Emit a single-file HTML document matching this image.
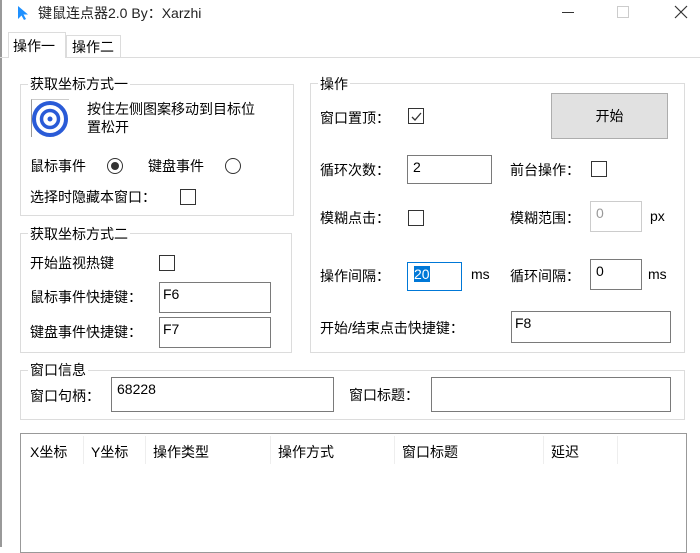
<!DOCTYPE html>
<html><head><meta charset="utf-8"><style>
*{margin:0;padding:0;box-sizing:border-box}
body{width:700px;height:547px;background:#fff;position:relative;overflow:hidden;font-family:"Liberation Sans","Noto Sans CJK SC",sans-serif;font-size:14px;color:#000}
.a{position:absolute;white-space:nowrap;line-height:16px}
.g{position:absolute;border:1px solid #dcdcdc}
.gt{position:absolute;background:#fff;padding:0 2px;line-height:16px;white-space:nowrap}
.tb{position:absolute;border:1px solid #7a7a7a;background:#fff;padding:3px 0 0 5px;line-height:16px}
.cb{position:absolute;width:16px;height:16px;border:1px solid #333;background:#fff}
.rd{position:absolute;width:16px;height:16px;border:1px solid #333;border-radius:50%;background:#fff}
</style></head><body>
<div style="position:absolute;left:0;top:0;width:2px;height:547px;background:#999"></div>
<svg class="a" style="left:16px;top:5px" width="14" height="16" viewBox="0 0 14 16"><path d="M2 1 L2 14 L5.5 10.5 L8 15 L10 14 L7.5 9.5 L12 9.5 Z" fill="#1e90ff"/></svg>
<div class="a" style="left:38px;top:5px;font-size:14px;color:#222">键鼠连点器2.0 By：Xarzhi</div>
<div class="a" style="left:562px;top:12px;width:12px;height:1px;background:#333"></div>
<div class="a" style="left:617px;top:6px;width:12px;height:12px;border:1px solid #ccc"></div>
<svg class="a" style="left:674px;top:5px" width="14" height="14"><path d="M1 1L13 13M13 1L1 13" stroke="#333" stroke-width="1.2"/></svg>
<div class="a" style="left:0;top:57px;width:700px;height:1px;background:#dcdcdc"></div>
<div class="a" style="left:8px;top:32px;width:58px;height:26px;border:1px solid #dcdcdc;border-bottom:none;background:#fff;padding:5px 0 0 4px">操作一</div>
<div class="a" style="left:66px;top:35px;width:55px;height:22px;border:1px solid #dcdcdc;border-bottom:none;padding:3px 0 0 5px">操作二</div>

<div class="g" style="left:20px;top:84px;width:274px;height:132px"></div>
<div class="gt" style="left:28px;top:76px">获取坐标方式一</div>
<div class="a" style="left:31px;top:99px;width:38px;height:38px;border-left:1px solid #999;border-top:1px solid #ccc"></div>
<svg class="a" style="left:31px;top:100px" width="40" height="38"><circle cx="19" cy="19" r="16" fill="none" stroke="#2a5bd7" stroke-width="4"/><circle cx="19" cy="19" r="8.5" fill="none" stroke="#2a5bd7" stroke-width="3.5"/><circle cx="19" cy="19" r="2.5" fill="#2a5bd7"/></svg>
<div class="a" style="left:87px;top:101px">按住左侧图案移动到目标位</div>
<div class="a" style="left:87px;top:119px">置松开</div>
<div class="a" style="left:30px;top:158px">鼠标事件</div>
<div class="rd" style="left:107px;top:158px"><div style="position:absolute;left:3px;top:3px;width:8px;height:8px;border-radius:50%;background:#333"></div></div>
<div class="a" style="left:148px;top:158px">键盘事件</div>
<div class="rd" style="left:225px;top:158px"></div>
<div class="a" style="left:30px;top:189px">选择时隐藏本窗口：</div>
<div class="cb" style="left:180px;top:189px"></div>

<div class="g" style="left:20px;top:233px;width:272px;height:120px"></div>
<div class="gt" style="left:28px;top:226px">获取坐标方式二</div>
<div class="a" style="left:30px;top:255px">开始监视热键</div>
<div class="cb" style="left:159px;top:255px"></div>
<div class="a" style="left:30px;top:289px">鼠标事件快捷键：</div>
<div class="tb" style="left:159px;top:282px;width:112px;height:31px;padding-left:3px">F6</div>
<div class="a" style="left:30px;top:324px">键盘事件快捷键：</div>
<div class="tb" style="left:159px;top:317px;width:112px;height:31px;padding-left:3px">F7</div>

<div class="g" style="left:310px;top:83px;width:375px;height:270px"></div>
<div class="gt" style="left:318px;top:76px">操作</div>
<div class="a" style="left:320px;top:110px">窗口置顶：</div>
<div class="cb" style="left:408px;top:108px"><svg style="position:absolute;left:1px;top:1px" width="13" height="13"><path d="M2 7 L5 10 L11 3" fill="none" stroke="#333" stroke-width="1.3"/></svg></div>
<div class="a" style="left:551px;top:93px;width:117px;height:46px;border:1px solid #adadad;background:#e1e1e1;text-align:center;line-height:44px">开始</div>
<div class="a" style="left:320px;top:162px">循环次数：</div>
<div class="tb" style="left:407px;top:155px;width:85px;height:29px">2</div>
<div class="a" style="left:510px;top:162px">前台操作：</div>
<div class="cb" style="left:591px;top:161px"></div>
<div class="a" style="left:320px;top:210px">模糊点击：</div>
<div class="cb" style="left:408px;top:210px"></div>
<div class="a" style="left:510px;top:210px">模糊范围：</div>
<div class="tb" style="left:590px;top:201px;width:52px;height:31px;border-color:#ccc;color:#999">0</div>
<div class="a" style="left:650px;top:208px">px</div>
<div class="a" style="left:320px;top:268px">操作间隔：</div>
<div class="tb" style="left:407px;top:262px;width:55px;height:29px;border-color:#0078d7;padding-left:6px"><span style="background:#0078d7;color:#fff">20</span></div>
<div class="a" style="left:471px;top:266px">ms</div>
<div class="a" style="left:510px;top:268px">循环间隔：</div>
<div class="tb" style="left:590px;top:259px;width:52px;height:31px">0</div>
<div class="a" style="left:648px;top:266px">ms</div>
<div class="a" style="left:320px;top:320px">开始/结束点击快捷键：</div>
<div class="tb" style="left:511px;top:311px;width:160px;height:32px;padding-left:3px">F8</div>

<div class="g" style="left:20px;top:370px;width:665px;height:50px"></div>
<div class="gt" style="left:28px;top:362px">窗口信息</div>
<div class="a" style="left:30px;top:388px">窗口句柄：</div>
<div class="tb" style="left:111px;top:377px;width:223px;height:35px">68228</div>
<div class="a" style="left:349px;top:387px">窗口标题：</div>
<div class="tb" style="left:431px;top:377px;width:240px;height:35px"></div>

<div class="a" style="left:20px;top:433px;width:667px;height:120px;border:1px solid #999"></div>
<div class="a" style="left:30px;top:444px">X坐标</div>
<div class="a" style="left:91px;top:444px">Y坐标</div>
<div class="a" style="left:153px;top:444px">操作类型</div>
<div class="a" style="left:278px;top:444px">操作方式</div>
<div class="a" style="left:402px;top:444px">窗口标题</div>
<div class="a" style="left:551px;top:444px">延迟</div>
<div class="a" style="left:83px;top:436px;width:1px;height:28px;background:#eee"></div>
<div class="a" style="left:145px;top:436px;width:1px;height:28px;background:#eee"></div>
<div class="a" style="left:270px;top:436px;width:1px;height:28px;background:#eee"></div>
<div class="a" style="left:394px;top:436px;width:1px;height:28px;background:#eee"></div>
<div class="a" style="left:543px;top:436px;width:1px;height:28px;background:#eee"></div>
<div class="a" style="left:617px;top:436px;width:1px;height:28px;background:#eee"></div>
</body></html>
